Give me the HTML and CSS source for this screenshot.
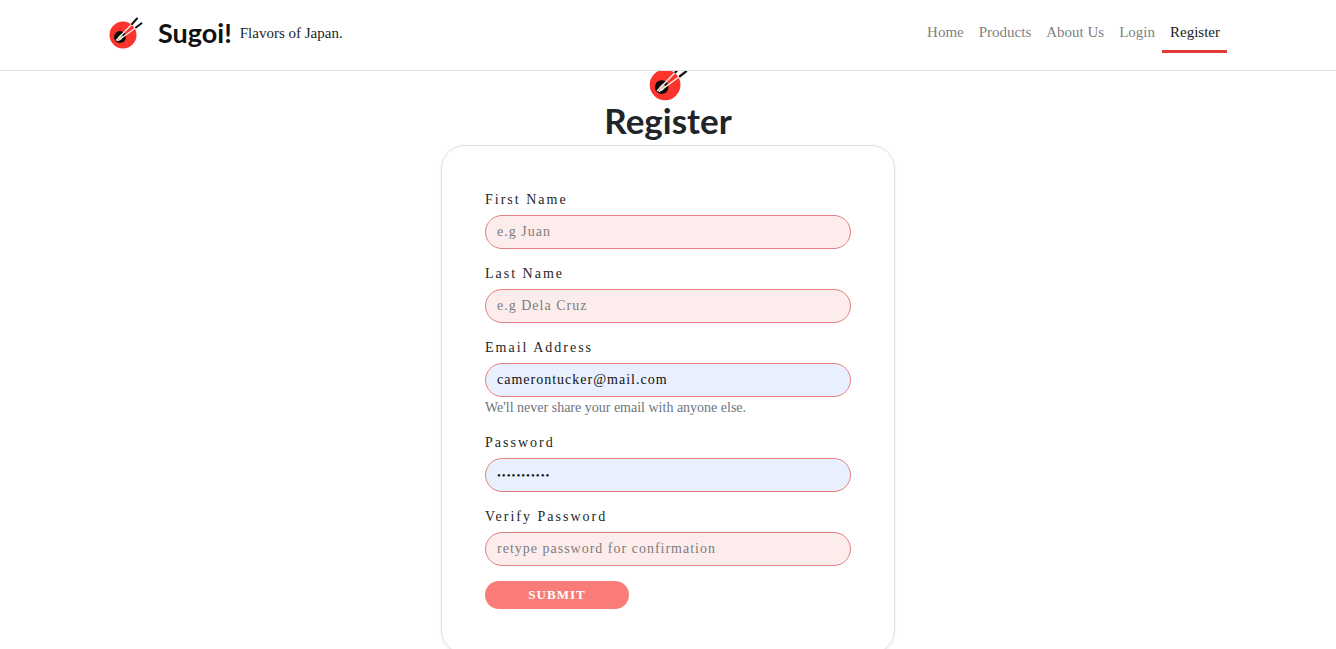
FILE: index.html
```html
<!DOCTYPE html>
<html lang="en">
<head>
<meta charset="utf-8">
<meta name="viewport" content="width=device-width, initial-scale=1">
<title>Sugoi! | Register</title>
<link rel="stylesheet" href="styles.css">
</head>
<body>
<svg class="sprite" aria-hidden="true">
  <symbol id="logo" viewBox="0 0 36 34">
    <circle cx="15" cy="19" r="13.5" fill="#fc342d"/>
    <circle cx="12" cy="21" r="6" fill="#0b0b0b"/>
    <path d="M10 21l3-2.800 2.500 2.200-2.500 3.600-2.500.5z" fill="#a9bd8c"/>
    <path d="M8 24.500L24 8M9.500 25L28 11.500" stroke="#fdeee6" stroke-width="1.300" fill="none"/>
    <path d="M24 8L29 2.500M28 11.500L33.500 7.300" stroke="#111" stroke-width="2" stroke-linecap="round" fill="none"/>
  </symbol>
</svg>

<header class="navbar">
  <div class="container">
    <a class="brand" href="#">
      <svg class="brand-logo" role="img" aria-label="Sugoi logo"><use href="#logo"/></svg>
      <span class="brand-name">Sugoi!</span>
      <span class="tagline">Flavors of Japan.</span>
    </a>
    <nav class="nav">
      <a class="nav-link" href="#">Home</a>
      <a class="nav-link" href="#">Products</a>
      <a class="nav-link" href="#">About Us</a>
      <a class="nav-link" href="#">Login</a>
      <a class="nav-link active" href="#" aria-current="page">Register</a>
    </nav>
  </div>
</header>

<main class="page">
  <svg class="page-logo" aria-hidden="true"><use href="#logo"/></svg>
  <h1 class="title">Register</h1>
  <form class="card">
    <div class="field">
      <label for="first">First Name</label>
      <input id="first" type="text" placeholder="e.g Juan">
    </div>
    <div class="field">
      <label for="last">Last Name</label>
      <input id="last" type="text" placeholder="e.g Dela Cruz">
    </div>
    <div class="field">
      <label for="email">Email Address</label>
      <input id="email" class="filled" type="email" value="camerontucker@mail.com" aria-describedby="email-help">
      <small id="email-help" class="help">We'll never share your email with anyone else.</small>
    </div>
    <div class="field">
      <label for="password">Password</label>
      <input id="password" class="filled masked" type="password" value="sugoijapan1">
    </div>
    <div class="field">
      <label for="verify">Verify Password</label>
      <input id="verify" type="password" placeholder="retype password for confirmation">
    </div>
    <button class="submit" type="submit">SUBMIT</button>
  </form>
</main>
</body>
</html>
```

FILE: styles.css
```css
* {
  box-sizing: border-box;
}

body {
  margin: 0;
  background: #fff;
  color: #212529;
  font-family: "Liberation Serif", serif;
  font-size: 15px;
}

.sprite {
  position: absolute;
  width: 0;
  height: 0;
}

.navbar {
  position: sticky;
  top: 0;
  z-index: 1;
  background: #fff;
  border-bottom: 1px solid #dee0e2;
}

.container {
  display: flex;
  align-items: center;
  justify-content: space-between;
  max-width: 1140px;
  min-height: 70px;
  margin: 0 auto;
  padding: 0 11px 4px 10px;
}

.brand {
  display: flex;
  align-items: center;
  color: #212529;
  text-decoration: none;
}

.brand-logo {
  width: 36px;
  height: 34px;
  margin-right: 14px;
}

.brand-name {
  margin-right: 8px;
  color: #111;
  font: 700 27px/32px Lato, sans-serif;
}

.tagline {
  line-height: 32px;
}

.nav {
  display: flex;
}

.nav-link {
  padding: 6px 7px 6px 8px;
  border-bottom: 3px solid transparent;
  color: #7f7f7f;
  line-height: 24px;
  text-decoration: none;
}

.nav-link.active {
  border-color: #e53935;
  color: #1a1a1a;
}

.page {
  display: flex;
  flex-direction: column;
  align-items: center;
  margin-top: -8px;
}

.page-logo {
  width: 41px;
  height: 39px;
}

.title {
  margin: 0 0 7px;
  font: 700 35px/36px Lato, sans-serif;
}

.card {
  width: 100%;
  max-width: 454px;
  padding: 44px 43px;
  border: 1px solid #dee0e2;
  border-radius: 24px;
  box-shadow: 0 1px 3px rgba(0, 0, 0, 0.08);
}

.field {
  display: flex;
  flex-direction: column;
  margin-bottom: 15px;
}

label {
  margin-bottom: 5px;
  font-size: 14px;
  line-height: 20px;
  letter-spacing: 2px;
}

input {
  width: 100%;
  height: 34px;
  padding: 0 11px;
  border: 1px solid #e57f80;
  border-radius: 17px;
  background: #fdecec;
  color: #111;
  font: inherit;
  font-size: 14px;
  letter-spacing: 1px;
}

input.filled {
  background: #e8f0fe;
}

input.masked {
  font-size: 11px;
}

input::placeholder {
  color: #7c7c80;
  opacity: 1;
}

.help {
  color: #6c757d;
  font-size: 14px;
  line-height: 21px;
}

.submit {
  width: 144px;
  height: 28px;
  border: 0;
  border-radius: 14px;
  background: #fa7c79;
  color: #fff;
  font: inherit;
  font-size: 13px;
  font-weight: 700;
  letter-spacing: 1px;
}
```
